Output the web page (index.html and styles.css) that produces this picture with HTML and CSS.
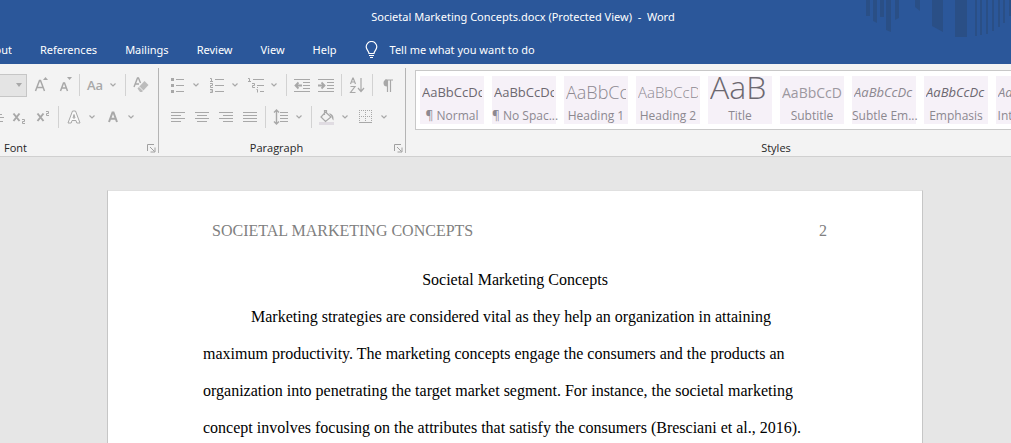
FILE: index.html
```html
<!DOCTYPE html>
<html lang="en">
<head>
<meta charset="utf-8">
<title>Societal Marketing Concepts.docx - Word</title>
<link rel="stylesheet" href="styles.css">
</head>
<body>
<svg class="sprite" aria-hidden="true">
  <symbol id="chev" viewBox="0 0 8 8"><path d="M1.500 2.500 4 5l2.500-2.500" fill="none" stroke="currentColor" stroke-width="1.200"/></symbol>
  <symbol id="launch" viewBox="0 0 9 9"><path d="M.5 7V.5H7M3 3l4.500 4.500M8 3.500V8H3.500" fill="none" stroke="currentColor"/></symbol>
</svg>

<header class="titlebar">
  <svg class="stripes" width="151" height="40" viewBox="0 0 151 40" aria-hidden="true">
    <path d="M6 0h4v16H6zM13 0h4v23l-4-2zM20 0h4v17h-4zM26 0h5v32l-5-2zM35 0h4v18l-4 2zM55 0h5v11l-5-4zM72 0h11v32l-11-6zM95 0h12v37H95zM115 0h2v36h-2zM120 0h2v35h-2zM126 0h2v34h-2zM132 0h2v31h-2zM138 0h2v27h-2zM143 0h2v23h-2zM149 0h2v16h-2z"/>
  </svg>
  <h1 class="doc-name">Societal Marketing Concepts.docx (Protected View)&nbsp; -&nbsp; Word</h1>
  <nav class="tabs" aria-label="Ribbon tabs">
    <button class="tab tab-cut">Layout</button>
    <button class="tab">References</button>
    <button class="tab">Mailings</button>
    <button class="tab">Review</button>
    <button class="tab">View</button>
    <button class="tab">Help</button>
    <button class="tab tell">
      <svg width="13" height="18" viewBox="0 0 13 18" aria-hidden="true"><path d="M4 12.500C4 10 1.200 9 1.200 5.800a5.300 5.300 0 0 1 10.600 0C11.800 9 9 10 9 12.500zM4 14.500h5M5 16.500h3" fill="none" stroke="currentColor" stroke-width="1.200"/></svg>
      Tell me what you want to do
    </button>
  </nav>
</header>

<div class="ribbon">
  <section class="group font-group" aria-label="Font">
    <div class="row">
      <button class="size-box" aria-label="Font size"><svg width="8" height="5" viewBox="0 0 8 5"><path d="M1 0h6L4 4z" fill="currentColor"/></svg></button>
      <button class="tool" aria-label="Grow font"><svg class="ico" viewBox="0 0 16 16"><path d="m3.500 14 4-10.500h1L12.500 14M5 10.500h6" fill="none" stroke="currentColor" stroke-width="1.500"/><path d="m11 3 2.500-3L16 3z" fill="currentColor"/></svg></button>
      <button class="tool" aria-label="Shrink font"><svg class="ico" viewBox="0 0 16 16"><path d="m4.500 14 3-8h1l3 8M5.500 11h5" fill="none" stroke="currentColor" stroke-width="1.500"/><path d="M11 0h5l-2.500 3z" fill="currentColor"/></svg></button>
      <span class="sep"></span>
      <button class="tool split" aria-label="Change case"><span class="glyph">Aa</span><svg class="chev"><use href="#chev"/></svg></button>
      <span class="sep"></span>
      <button class="tool" aria-label="Clear formatting"><svg class="ico" viewBox="0 0 16 16"><path d="m1 10 3.500-9h1L7.500 6M2 7h4" fill="none" stroke="currentColor" stroke-width="1.400"/><path d="m4.500 11.500 7-7.500 4 4L9 15H7z" fill="#bcbcbc"/><path d="m6 9.500 4.500 4.500" stroke="#f3f3f3"/></svg></button>
    </div>
    <div class="row">
      <button class="tool sliver" aria-label="Strikethrough"><svg width="4" height="12" viewBox="0 0 4 12"><path d="M0 3.500h2M0 6.500h4M0 10.500h3" stroke="currentColor" stroke-width="1.200"/></svg></button>
      <button class="tool" aria-label="Subscript"><svg class="ico" viewBox="0 0 16 16"><path d="m2.500 4.500 6 7.500M8.500 4.500l-6 7.500" stroke="currentColor" stroke-width="2"/><path d="M11 10.500h2.500v2h-2v2H14" fill="none" stroke="currentColor"/></svg></button>
      <button class="tool" aria-label="Superscript"><svg class="ico" viewBox="0 0 16 16"><path d="m2.500 4.500 6 7.500M8.500 4.500l-6 7.500" stroke="currentColor" stroke-width="2"/><path d="M11 2.500h2.500v2h-2v2H14" fill="none" stroke="currentColor"/></svg></button>
      <span class="sep"></span>
      <button class="tool split" aria-label="Text effects"><svg class="ico" viewBox="0 0 16 16"><path d="M2 14 6.500 2h3L14 14h-3.200l-.8-2.500H6L5.200 14zM7 9h2l-1-3.500z" fill="#fafafa" stroke="currentColor"/></svg><svg class="chev"><use href="#chev"/></svg></button>
      <button class="tool split" aria-label="Font colour"><svg class="ico" viewBox="0 0 16 16"><path d="M4 13 7.500 3.500h1L12 13M5.300 9.800h5.400" fill="none" stroke="currentColor" stroke-width="2"/></svg><svg class="chev"><use href="#chev"/></svg></button>
    </div>
    <div class="caption"><span>Font</span><button class="launch" aria-label="Font settings"><svg width="9" height="9"><use href="#launch"/></svg></button></div>
  </section>

  <section class="group para-group" aria-label="Paragraph">
    <div class="row">
      <button class="tool split" aria-label="Bullets"><svg class="ico" viewBox="0 0 16 16"><path d="M6 2.500h8M6 8.500h8M6 14.500h8" stroke="currentColor"/><path d="M1 1h3v3H1zM1 7h3v3H1zM1 13h3v3H1z" fill="currentColor"/></svg><svg class="chev"><use href="#chev"/></svg></button>
      <button class="tool split" aria-label="Numbering"><svg class="ico" viewBox="0 0 16 16"><path d="M6 2.500h9M6 8.500h9M6 14.500h9M1 1.500h1.500v3M1 4.500h3M1 6.500h2.500v2H1.500v2H4M1 12.500h2.500v3H1M1.500 14h2" fill="none" stroke="currentColor"/></svg><svg class="chev"><use href="#chev"/></svg></button>
      <button class="tool split" aria-label="Multilevel list"><svg class="ico" viewBox="0 0 16 16"><path d="M5 2.500h11M9 8.500h7M12 14.500h4M0 1.500h1.500v3M0 4.500h3M4 6.500h2.500v2H4.500v2H7M8.500 12.500h1v3M9.500 10v1" fill="none" stroke="currentColor"/></svg><svg class="chev"><use href="#chev"/></svg></button>
      <span class="sep"></span>
      <button class="tool" aria-label="Decrease indent"><svg class="ico" viewBox="0 0 16 16"><path d="M0 2.500h16M9 5.500h7M9 8.500h7M9 11.500h7M0 14.500h16" stroke="currentColor"/><path d="M8 8.500H2M4.500 5.500l-3 3 3 3" fill="none" stroke="currentColor" stroke-width="1.800"/></svg></button>
      <button class="tool" aria-label="Increase indent"><svg class="ico" viewBox="0 0 16 16"><path d="M0 2.500h16M9 5.500h7M9 8.500h7M9 11.500h7M0 14.500h16" stroke="currentColor"/><path d="M0 8.500h6M3.500 5.500l3 3-3 3" fill="none" stroke="currentColor" stroke-width="1.800"/></svg></button>
      <span class="sep"></span>
      <button class="tool" aria-label="Sort"><svg class="ico" viewBox="0 0 16 16"><path d="m1.500 7 2.300-6h.4l2.300 6M2.300 5h3.400M1.500 9.500h4.500l-4.500 6H6.500M12 1v13M9 11l3 3.500 3-3.500" fill="none" stroke="currentColor" stroke-width="1.200"/></svg></button>
      <span class="sep"></span>
      <button class="tool" aria-label="Show paragraph marks"><svg class="ico" viewBox="0 0 16 16"><path d="M7 2.500a3.500 3.500 0 0 0 0 7z" fill="currentColor"/><path d="M5 3h8M7.500 3v12M10.500 3v12" stroke="currentColor" stroke-width="1.200"/></svg></button>
    </div>
    <div class="row">
      <button class="tool" aria-label="Align left"><svg class="ico" viewBox="0 0 16 16"><path d="M1 3.500h14M1 6.500h10M1 9.500h14M1 12.500h10" stroke="currentColor"/></svg></button>
      <button class="tool" aria-label="Centre"><svg class="ico" viewBox="0 0 16 16"><path d="M1 3.500h14M3 6.500h10M1 9.500h14M3 12.500h10" stroke="currentColor"/></svg></button>
      <button class="tool" aria-label="Align right"><svg class="ico" viewBox="0 0 16 16"><path d="M1 3.500h14M5 6.500h10M1 9.500h14M5 12.500h10" stroke="currentColor"/></svg></button>
      <button class="tool" aria-label="Justify"><svg class="ico" viewBox="0 0 16 16"><path d="M1 3.500h14M1 6.500h14M1 9.500h14M1 12.500h14" stroke="currentColor"/></svg></button>
      <span class="sep"></span>
      <button class="tool split" aria-label="Line spacing"><svg class="ico" viewBox="0 0 16 16"><path d="M7 3.500h8M7 6.500h8M7 9.500h8M7 12.500h8" stroke="currentColor"/><path d="M3.500 1v14M1 3.500 3.500 1 6 3.500M1 12.500 3.500 15 6 12.500" fill="none" stroke="currentColor" stroke-width="1.400"/></svg><svg class="chev"><use href="#chev"/></svg></button>
      <span class="sep"></span>
      <button class="tool split" aria-label="Shading"><svg class="ico" viewBox="0 0 16 16"><path d="M0 13h15v3H0z" fill="#e0dce2"/><path d="M6.500 3 12 8l-5.500 4.500L2 8zM5.500 6V1.500h2V5" fill="none" stroke="currentColor" stroke-width="1.200"/><path d="M10 4.500c3 0 5 2 4.500 7-1.500-1-1.500-3-2-4z" fill="currentColor"/></svg><svg class="chev"><use href="#chev"/></svg></button>
      <button class="tool split" aria-label="Borders"><svg class="ico" viewBox="0 0 16 16"><path d="M1 1.500h13M1 7.500h13M1.500 1v13M7.500 1v13M13.500 1v13" stroke="currentColor" stroke-dasharray="1 1"/><path d="M1 13.500h13" stroke="currentColor"/></svg><svg class="chev"><use href="#chev"/></svg></button>
    </div>
    <div class="caption"><span>Paragraph</span><button class="launch" aria-label="Paragraph settings"><svg width="9" height="9"><use href="#launch"/></svg></button></div>
  </section>

  <section class="group styles-group" aria-label="Styles">
    <div class="gallery">
      <button class="style"><span class="sample">AaBbCcDc</span><span class="style-name">¶ Normal</span></button>
      <button class="style"><span class="sample">AaBbCcDc</span><span class="style-name">¶ No Spac...</span></button>
      <button class="style"><span class="sample h1">AaBbCc</span><span class="style-name">Heading 1</span></button>
      <button class="style"><span class="sample h2">AaBbCcD</span><span class="style-name">Heading 2</span></button>
      <button class="style"><span class="sample title">AaB</span><span class="style-name">Title</span></button>
      <button class="style"><span class="sample subtitle">AaBbCcD</span><span class="style-name">Subtitle</span></button>
      <button class="style"><span class="sample subtle">AaBbCcDc</span><span class="style-name">Subtle Em...</span></button>
      <button class="style"><span class="sample emphasis">AaBbCcDc</span><span class="style-name">Emphasis</span></button>
      <button class="style"><span class="sample subtle">AaBbCcDc</span><span class="style-name">Intense E...</span></button>
      <button class="style"><span class="sample">AaBbCcDc</span><span class="style-name">Strong</span></button>
    </div>
    <div class="caption"><span>Styles</span></div>
  </section>
</div>

<main class="canvas">
  <article class="page">
    <header class="running-head"><span>SOCIETAL MARKETING CONCEPTS</span><span>2</span></header>
    <h2 class="paper-title">Societal Marketing Concepts</h2>
    <p class="para">Marketing strategies are considered vital as they help an organization in attaining maximum productivity. The marketing concepts engage the consumers and the products an organization into penetrating the target market segment. For instance, the societal marketing concept involves focusing on the attributes that satisfy the consumers (Bresciani et al., 2016).</p>
  </article>
</main>
</body>
</html>
```

FILE: styles.css
```css
* { box-sizing: border-box; }

body {
  margin: 0;
  height: 100vh;
  overflow: hidden;
  display: flex;
  flex-direction: column;
  background: #e6e6e6;
  font: 12px/16px "Open Sans", "Noto Sans", sans-serif;
}

button {
  margin: 0;
  padding: 0;
  border: 0;
  background: none;
  color: inherit;
  font: inherit;
}

svg { display: block; flex: none; }

.sprite { position: absolute; width: 0; height: 0; }

/* Title bar and tabs */
.titlebar {
  position: relative;
  flex: none;
  display: flex;
  flex-direction: column;
  height: 64px;
  padding-top: 8px;
  background: #2b579a;
  color: #fff;
  font-family: "Noto Sans", "Open Sans", sans-serif;
  font-size: 11px;
}

.stripes { position: absolute; top: 0; right: 0; fill: #2a4f86; }

.doc-name {
  margin: 0;
  padding-left: 35px;
  text-align: center;
  font-size: 11px;
  font-weight: 400;
  line-height: 18px;
}

.tabs {
  display: flex;
  align-items: center;
  gap: 28px;
  margin-top: 14px;
  white-space: nowrap;
}

.tab { line-height: 20px; }

.tab-cut {
  display: flex;
  justify-content: flex-end;
  width: 12px;
  overflow: hidden;
}

.tell { display: flex; align-items: center; gap: 12px; }

/* Ribbon */
.ribbon {
  flex: none;
  display: flex;
  height: 93px;
  padding-top: 4px;
  border-bottom: 1px solid #d0d0d0;
  background: #f3f3f3;
  color: #a8a8a8;
  overflow: hidden;
}

.group {
  flex: none;
  display: flex;
  flex-direction: column;
  height: 85px;
  border-right: 1px solid #b4b4b4;
}

.font-group { width: 159px; }
.para-group { width: 247px; }
.styles-group { width: 741px; }

.row { display: flex; align-items: center; height: 30px; }
.row:first-child { height: 34px; }
.para-group .row { padding-left: 7px; }

.tool {
  flex: none;
  display: flex;
  align-items: center;
  justify-content: center;
  width: 24px;
  height: 22px;
}

.split { width: 39px; gap: 6px; justify-content: flex-start; padding-left: 4px; }
.sliver { width: 7px; justify-content: flex-start; }
.ico { width: 16px; height: 16px; }
.chev { width: 8px; height: 8px; }

.glyph { width: 16px; text-align: center; font-size: 13px; font-weight: 600; }

.sep { flex: none; width: 1px; height: 22px; margin: 0 3px; background: #d2d2d2; }

.size-box {
  flex: none;
  display: flex;
  align-items: center;
  justify-content: flex-end;
  width: 27px;
  height: 23px;
  margin-right: 1px;
  padding-right: 3px;
  border: 1px solid #c6c6c6;
  border-left: 0;
  background: #e4e4e4;
}

.caption {
  display: flex;
  align-items: center;
  height: 16px;
  margin-top: auto;
  margin-bottom: -3px;
  color: #262626;
  font-size: 11px;
}

.caption span { flex: 1; text-align: center; }
.font-group .caption span { text-align: left; padding-left: 4px; }
.launch { width: 11px; color: #a0a0a0; }

/* Style gallery */
.gallery {
  display: flex;
  gap: 8px;
  height: 60px;
  margin: 2px 0 0 9px;
  padding: 5px 4px;
  border: 1px solid #c8c8c8;
  background: #fff;
  overflow: hidden;
}

.style {
  flex: none;
  display: flex;
  flex-direction: column;
  width: 64px;
  height: 48px;
  background: #f6f1f8;
  color: #8c8890;
}

.sample {
  width: 60px;
  height: 33px;
  margin-left: 2px;
  overflow: hidden;
  text-align: left;
  white-space: nowrap;
  color: #6c6870;
  font: 13px/33px "Open Sans", sans-serif;
}

.h1 { font-size: 18px; font-weight: 300; color: #8c8890; }
.h2 { font-size: 15px; font-weight: 300; color: #8c8890; }
.title { font-size: 32px; line-height: 22px; font-weight: 300; }
.subtitle { font-size: 14px; color: #9c98a0; }
.subtle { font-style: italic; color: #8c8890; }
.emphasis { font-style: italic; }

.style-name { text-align: center; white-space: nowrap; line-height: 16px; }

/* Document */
.canvas {
  flex: 1;
  display: flex;
  justify-content: center;
  min-height: 0;
  padding: 33px 0 0 19px;
}

.page {
  width: 816px;
  padding: 30px 95px 0;
  border: 1px solid #c6c6c6;
  border-top-color: #e0e0e0;
  border-bottom: 0;
  background: #fff;
  color: #000;
  font: 16px/37px "Liberation Serif", "Times New Roman", serif;
}

.running-head {
  display: flex;
  justify-content: space-between;
  padding-left: 9px;
  margin-bottom: 20px;
  color: #808080;
  line-height: 20px;
}

.paper-title { margin: 0; text-align: center; font: inherit; }
.para { margin: 0; text-indent: 48px; }
```
